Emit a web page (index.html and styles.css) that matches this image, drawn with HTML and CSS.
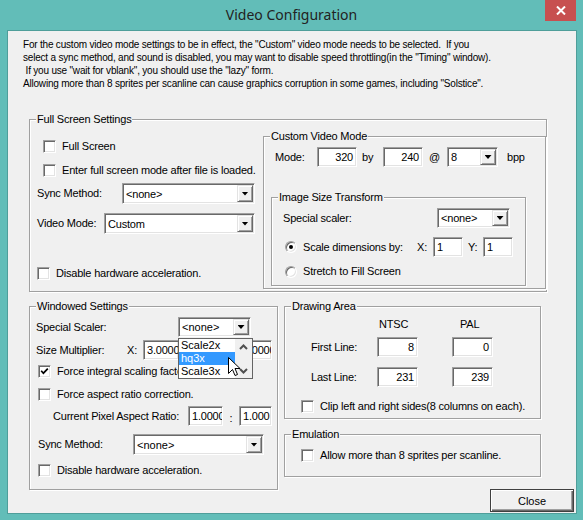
FILE: index.html
```html
<!DOCTYPE html>
<html lang="en">
<head>
<meta charset="utf-8">
<title>Video Configuration</title>
<link rel="stylesheet" href="styles.css">
</head>
<body>
<div class="window">
  <div class="titlebar">
    <div class="title">Video Configuration</div>
    <div class="close-x">
      <svg width="10" height="9" viewBox="0 0 10 9"><path d="M1 0.5L9 8.5M9 0.5L1 8.5" stroke="#fff" stroke-width="2"/></svg>
    </div>
  </div>

  <div class="client">
    <p class="intro">For the custom video mode settings to be in effect, the "Custom" video mode needs to be selected.  If you
select a sync method, and sound is disabled, you may want to disable speed throttling(in the "Timing" window).
 If you use "wait for vblank", you should use the "lazy" form.
Allowing more than 8 sprites per scanline can cause graphics corruption in some games, including "Solstice".</p>

    <!-- Full screen settings with the custom mode block on its right -->
    <div class="group fs-group">
      <span class="legend">Full Screen Settings</span>
      <div class="fs-left">
        <div class="check fs-check1"><span class="box"></span>Full Screen</div>
        <div class="check fs-check2"><span class="box"></span>Enter full screen mode after file is loaded.</div>
        <div class="row fs-sync">
          <span class="lbl w85">Sync Method:</span>
          <div class="combo w133"><span class="val">&lt;none&gt;</span><span class="drop"></span></div>
        </div>
        <div class="row fs-video">
          <span class="lbl w67">Video Mode:</span>
          <div class="combo w151"><span class="val">Custom</span><span class="drop"></span></div>
        </div>
        <div class="check fs-disable"><span class="box"></span>Disable hardware acceleration.</div>
      </div>

      <div class="group custom-group">
        <span class="legend">Custom Video Mode</span>
        <div class="row mode-row">
          <span class="lbl w42">Mode:</span>
          <div class="edit num w40">320</div>
          <span class="lbl w26 pl5">by</span>
          <div class="edit num w40">240</div>
          <span class="lbl w24 pl6">@</span>
          <div class="combo h20 w51"><span class="val">8</span><span class="drop"></span></div>
          <span class="lbl pl9">bpp</span>
        </div>

        <div class="group img-group">
          <span class="legend">Image Size Transform</span>
          <div class="row scaler-row">
            <span class="lbl w154">Special scaler:</span>
            <div class="combo h20 w73"><span class="val">&lt;none&gt;</span><span class="drop"></span></div>
          </div>
          <div class="row radio-row1">
            <span class="radio on"></span>
            <span class="lbl w114">Scale dimensions by:</span>
            <span class="lbl w16">X:</span>
            <div class="edit w30">1</div>
            <span class="lbl w20 pl5">Y:</span>
            <div class="edit w30">1</div>
          </div>
          <div class="row radio-row2">
            <span class="radio"></span>
            <span class="lbl">Stretch to Fill Screen</span>
          </div>
        </div>
      </div>
    </div>

    <div class="lower">
      <!-- Windowed settings, with the scaler list opened over it -->
      <div class="group win-group">
        <span class="legend">Windowed Settings</span>
        <div class="row ss-row">
          <span class="lbl w142">Special Scaler:</span>
          <div class="combo h20 w73 wide"><span class="val">&lt;none&gt;</span><span class="drop"></span></div>
        </div>
        <div class="row size-row">
          <span class="lbl w91">Size Multiplier:</span>
          <span class="lbl w16">X:</span>
          <div class="edit w36">3.0000</div>
          <span class="lbl w60 yl">Y:</span>
          <div class="edit w33">3.0000</div>
        </div>
        <div class="check integral"><span class="box checked"><svg width="9" height="9" viewBox="0 0 9 9"><path d="M1.2 3.8L3.4 6.2L7.8 1.6" fill="none" stroke="#000" stroke-width="1.7"/></svg></span>Force integral scaling factor.</div>
        <div class="check aspect"><span class="box"></span>Force aspect ratio correction.</div>
        <div class="row ratio-row">
          <span class="lbl w135">Current Pixel Aspect Ratio:</span>
          <div class="edit w35">1.0000</div>
          <span class="lbl w16 colon">:</span>
          <div class="edit w33">1.000</div>
        </div>
        <div class="row wsync-row">
          <span class="lbl w95">Sync Method:</span>
          <div class="combo w131 wide"><span class="val">&lt;none&gt;</span><span class="drop"></span></div>
        </div>
        <div class="check wdisable"><span class="box"></span>Disable hardware acceleration.</div>

        <div class="listbox">
          <div class="items">
            <div class="item">Scale2x</div>
            <div class="item sel">hq3x</div>
            <div class="item">Scale3x</div>
          </div>
          <div class="vscroll">
            <svg width="9" height="6" viewBox="0 0 9 6"><path d="M1 5L4.5 1.5L8 5" fill="none" stroke="#505050" stroke-width="2"/></svg>
            <svg width="9" height="6" viewBox="0 0 9 6"><path d="M1 1L4.5 4.5L8 1" fill="none" stroke="#505050" stroke-width="2"/></svg>
          </div>
        </div>

        <svg class="pointer" width="13" height="21" viewBox="0 0 13 21">
          <path d="M0.5 0.5L0.5 16.5L4.5 12.5L7 18.5L9.5 17.5L7 11.5L12 11.5Z" fill="#fff" stroke="#000" stroke-width="1" stroke-linejoin="miter"/>
        </svg>
      </div>

      <div class="right-col">
        <div class="group draw-group">
          <span class="legend">Drawing Area</span>
          <div class="dg-head">
            <span class="hd-ntsc">NTSC</span><span class="hd-pal">PAL</span>
          </div>
          <div class="row dg-row dg-first">
            <span class="lbl w66">First Line:</span>
            <div class="edit num w41">8</div>
            <div class="edit num w41 ml34">0</div>
          </div>
          <div class="row dg-row dg-last">
            <span class="lbl w66">Last Line:</span>
            <div class="edit num w41">231</div>
            <div class="edit num w41 ml34">239</div>
          </div>
          <div class="check clip"><span class="box"></span>Clip left and right sides(8 columns on each).</div>
        </div>

        <div class="group emu-group">
          <span class="legend">Emulation</span>
          <div class="check"><span class="box"></span>Allow more than 8 sprites per scanline.</div>
        </div>

        <div class="btn-close">Close</div>
      </div>
    </div>
  </div>
</div>
</body>
</html>
```

FILE: styles.css
```css
* { box-sizing: border-box; }

html, body {
  margin: 0;
  padding: 0;
}

body {
  width: 583px;
  height: 520px;
  overflow: hidden;
  font-family: "Liberation Sans", Arial, sans-serif;
  font-size: 11px;
  color: #000;
}

/* ---------- window frame ---------- */
.window {
  width: 583px;
  height: 520px;
  background: #62bdb8;
  display: flex;
  flex-direction: column;
}

.titlebar {
  position: relative;
  height: 30px;
  flex: none;
}

.title {
  text-align: center;
  font-family: "Noto Sans", sans-serif;
  font-size: 14px;
  line-height: 29px;
  color: #222;
}

.close-x {
  position: absolute;
  top: 0;
  left: 545px;
  width: 31px;
  height: 21px;
  background: #c75050;
  display: flex;
  align-items: center;
  justify-content: center;
}

.client {
  margin-left: 7px;
  width: 570px;
  height: 484px;
  border: 1px solid #4f9e9a;
  background: #f0f0f0;
  letter-spacing: -0.2px;
}

.intro {
  margin: 0;
  padding: 7px 0 0 15px;
  font-size: 10px;
  line-height: 13px;
  white-space: pre;
}

/* ---------- shared controls ---------- */
.group {
  position: relative;
  border: 1px solid #a0a0a0;
  box-shadow: 1px 1px 0 #fff, inset 1px 1px 0 #fff;
  flex: none;
}

.legend {
  position: absolute;
  top: -7px;
  left: 6px;
  padding: 0 1px;
  background: #f0f0f0;
  line-height: 13px;
  white-space: nowrap;
}

.row {
  display: flex;
  align-items: center;
  white-space: nowrap;
}

.lbl {
  flex: none;
  line-height: 13px;
}

.check {
  display: flex;
  align-items: center;
  height: 13px;
  line-height: 13px;
  white-space: nowrap;
}

.box {
  width: 13px;
  height: 13px;
  flex: none;
  margin-right: 6px;
  background: #fff;
  border: 1px solid;
  border-color: #a0a0a0 #fff #fff #a0a0a0;
  box-shadow: inset 1px 1px 0 #696969, inset -1px -1px 0 #e3e3e3;
  display: flex;
  align-items: center;
  justify-content: center;
}

.radio {
  width: 12px;
  height: 12px;
  flex: none;
  margin-right: 6px;
  border-radius: 50%;
  background: #fff;
  border: 1px solid;
  border-color: #a0a0a0 #fff #fff #a0a0a0;
  box-shadow: inset 1px 1px 0 #696969, inset -1px -1px 0 #e3e3e3;
  display: flex;
  align-items: center;
  justify-content: center;
}

.radio.on::after {
  content: "";
  width: 4px;
  height: 4px;
  border-radius: 50%;
  background: #000;
}

.edit,
.combo {
  height: 20px;
  flex: none;
  background: #fff;
  border: 1px solid;
  border-color: #a0a0a0 #fff #fff #a0a0a0;
  box-shadow: inset 1px 1px 0 #696969, inset -1px -1px 0 #e3e3e3;
  overflow: hidden;
  white-space: nowrap;
}

.edit {
  display: flex;
  align-items: center;
  padding: 0 2px 0 3px;
}

.edit.num {
  justify-content: flex-end;
  padding-right: 3px;
}

.combo {
  display: flex;
  height: 21px;
  padding: 1px;
}

.combo.h20 { height: 20px; }

.combo .val {
  flex: 1;
  display: flex;
  align-items: center;
  padding-left: 2px;
}

.combo.wide .val { letter-spacing: 0; }

.drop {
  width: 16px;
  flex: none;
  background: #f0f0f0;
  border: 1px solid;
  border-color: #e3e3e3 #696969 #696969 #e3e3e3;
  box-shadow: inset 1px 1px 0 #fff, inset -1px -1px 0 #a0a0a0;
  display: flex;
  align-items: center;
  justify-content: center;
}

.drop::after {
  content: "";
  width: 7px;
  height: 4px;
  background: #000;
  clip-path: polygon(0 0, 100% 0, 50% 100%);
}

/* widths */
.w16 { width: 16px; }
.w20 { width: 20px; }
.w24 { width: 24px; }
.w26 { width: 26px; }
.w30 { width: 30px; }
.w33 { width: 33px; }
.w35 { width: 35px; }
.w36 { width: 36px; }
.w40 { width: 40px; }
.w41 { width: 41px; }
.w42 { width: 42px; }
.w51 { width: 51px; }
.w60 { width: 60px; }
.w66 { width: 66px; }
.w67 { width: 67px; }
.w73 { width: 73px; }
.w85 { width: 85px; }
.w91 { width: 91px; }
.w95 { width: 95px; }
.w114 { width: 114px; }
.w131 { width: 131px; }
.w133 { width: 133px; }
.w135 { width: 135px; }
.w142 { width: 142px; }
.w151 { width: 151px; }
.w154 { width: 154px; }
.pl5 { padding-left: 5px; }
.pl6 { padding-left: 6px; }
.pl9 { padding-left: 9px; }
.ml34 { margin-left: 34px; }

/* ---------- full screen settings ---------- */
.fs-group {
  margin: 29px 0 0 21px;
  width: 518px;
  height: 173px;
  display: flex;
}

.fs-left {
  width: 233px;
  flex: none;
  padding: 20px 0 0 7px;
  display: flex;
  flex-direction: column;
  align-items: flex-start;
}

.fs-check1 { margin-left: 6px; }
.fs-check2 { margin: 11px 0 0 6px; }
.fs-sync { margin-top: 6px; height: 21px; }
.fs-video { margin-top: 9px; height: 21px; }
.fs-disable { margin-top: 33px; }

.custom-group {
  margin-top: 16px;
  width: 283px;
  height: 153px;
}

.mode-row {
  margin: 10px 0 0 11px;
  height: 20px;
}

.img-group {
  margin: 30px 0 0 7px;
  width: 255px;
  height: 89px;
}

.scaler-row {
  margin: 10px 0 0 11px;
  height: 20px;
}

.radio-row1 {
  margin: 9px 0 0 13px;
  height: 20px;
}

.radio-row2 {
  margin: 8px 0 0 13px;
  height: 13px;
}

/* ---------- lower half ---------- */
.lower {
  display: flex;
  align-items: flex-start;
  gap: 6px;
  margin: 14px 0 0 21px;
}

.win-group {
  width: 249px;
  height: 184px;
  padding-top: 10px;
}

.ss-row { margin-left: 6px; height: 20px; }
.size-row { margin: 3px 0 0 6px; height: 20px; }
.yl { text-align: right; padding-right: 5px; }
.integral { margin: 5px 0 0 8px; }
.aspect { margin: 10px 0 0 8px; }
.ratio-row { margin: 5px 0 0 23px; height: 20px; }
.colon { text-align: center; padding-top: 5px; }
.wsync-row { margin: 8px 0 0 8px; height: 21px; }
.wdisable { margin: 9px 0 0 8px; }

.listbox {
  position: absolute;
  left: 148px;
  top: 31px;
  width: 75px;
  height: 41px;
  border: 1px solid #646464;
  background: #fff;
  display: flex;
  letter-spacing: 0;
}

.items { flex: 1; }

.item {
  height: 13px;
  line-height: 13px;
  padding-left: 2px;
}

.item.sel {
  background: #3399ff;
  color: #fff;
}

.vscroll {
  width: 17px;
  flex: none;
  background: #f0f0f0;
  display: flex;
  flex-direction: column;
  align-items: center;
  justify-content: space-between;
  padding: 5px 0 4px;
}

.pointer {
  position: absolute;
  left: 198px;
  top: 50px;
}

.right-col {
  width: 290px;
  display: flex;
  flex-direction: column;
}

.draw-group {
  width: 257px;
  height: 113px;
  padding-top: 11px;
}

.dg-head {
  display: flex;
  height: 13px;
  line-height: 13px;
  padding-left: 92px;
}

.hd-ntsc { width: 75px; padding-left: 2px; }
.hd-pal { padding-left: 8px; }

.dg-row { padding-left: 26px; height: 20px; }
.dg-first { margin-top: 6px; }
.dg-last { margin-top: 10px; }
.clip { margin: 13px 0 0 16px; }

.emu-group {
  margin-top: 15px;
  width: 257px;
  height: 43px;
  padding: 14px 0 0 16px;
}

.btn-close {
  margin: 12px 0 0 206px;
  width: 84px;
  height: 23px;
  background: #f0f0f0;
  border: 1px solid #404040;
  box-shadow: inset 1px 1px 0 #fff, inset -1px -1px 0 #696969, inset -2px -2px 0 #a0a0a0;
  display: flex;
  align-items: center;
  justify-content: center;
  letter-spacing: 0;
}
```
